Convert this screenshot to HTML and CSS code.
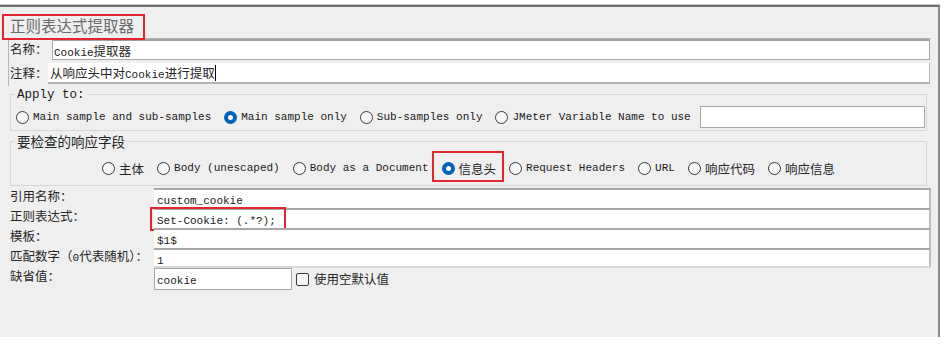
FILE: index.html
```html
<!DOCTYPE html>
<html>
	<head>
		<meta charset="UTF-8">
		<title>正则表达式提取器</title>
		<link rel="stylesheet" href="styles.css">
	</head>
	<body>
		<div class="panel">
			<!-- title -->
			<div class="title">
				正则表达式提取器
				<span class="mark mark-title"></span>
			</div>

			<!-- name / comments -->
			<div class="namebox">
				<div class="row">
					<span class="lbl lbl-name">名称：</span>
					<div class="field"><span class="en">Cookie</span>提取器</div>
				</div>
				<div class="row row-note">
					<span class="lbl lbl-note">注释：</span>
					<div class="field note">从响应头中对<span class="en">Cookie</span>进行提取<span class="caret"></span></div>
				</div>
			</div>

			<!-- apply to -->
			<fieldset class="group apply">
				<legend><span class="en">Apply to:</span></legend>
				<div class="opts">
					<label class="opt"><span class="radio"></span><span class="en">Main sample and sub-samples</span></label>
					<label class="opt"><span class="radio on"></span><span class="en">Main sample only</span></label>
					<label class="opt"><span class="radio"></span><span class="en">Sub-samples only</span></label>
					<label class="opt"><span class="radio"></span><span class="en">JMeter Variable Name to use</span></label>
					<div class="varname"></div>
				</div>
			</fieldset>

			<!-- field to check -->
			<fieldset class="group check">
				<legend>要检查的响应字段</legend>
				<div class="opts centered">
					<label class="opt"><span class="radio"></span>主体</label>
					<label class="opt"><span class="radio"></span><span class="en">Body (unescaped)</span></label>
					<label class="opt"><span class="radio"></span><span class="en">Body as a Document</span></label>
					<label class="opt hl"><span class="radio on"></span>信息头<span class="mark mark-hl"></span></label>
					<label class="opt"><span class="radio"></span><span class="en">Request Headers</span></label>
					<label class="opt"><span class="radio"></span><span class="en">URL</span></label>
					<label class="opt"><span class="radio"></span>响应代码</label>
					<label class="opt"><span class="radio"></span>响应信息</label>
				</div>
			</fieldset>

			<!-- settings -->
			<div class="settings">
				<div class="srow">
					<span class="slbl">引用名称：</span>
					<div class="inp"><span class="en">custom_cookie</span></div>
				</div>
				<div class="srow">
					<span class="slbl">正则表达式：</span>
					<div class="inp"><span class="en">Set-Cookie: (.*?);</span><span class="mark mark-re"></span></div>
				</div>
				<div class="srow">
					<span class="slbl">模板：</span>
					<div class="inp"><span class="en">$1$</span></div>
				</div>
				<div class="srow">
					<span class="slbl">匹配数字（<span class="en">0</span>代表随机）：</span>
					<div class="inp last"><span class="en">1</span></div>
				</div>
				<div class="srow">
					<span class="slbl">缺省值：</span>
					<div class="inp short"><span class="en">cookie</span></div>
					<label class="chk"><span class="box"></span>使用空默认值</label>
				</div>
			</div>
		</div>
	</body>
</html>
```

FILE: styles.css
```css
body {
	margin: 0;
	background-color: #ffffff;
	font-family: "Noto Sans CJK SC", sans-serif;
	font-size: 12.5px;
	color: #262626;
}
.en {
	font-family: "Liberation Mono", "Noto Sans CJK SC", monospace;
	font-size: 11px;
	color: #1a1a1a;
}
.panel {
	margin-top: 5px;
	width: 938px;
	height: 330px;
	background-color: #efefef;
	border-top: 2px solid #6f6f6f;
	border-right: 2px solid #8c8c8c;
	box-shadow: 0px -1px 0px #c4c4c4;
}
.mark {
	position: absolute;
	border: 2px solid #e3262e;
	box-sizing: border-box;
	pointer-events: none;
}
.title {
	position: relative;
	margin-top: 7px;
	padding-left: 10px;
	height: 24px;
	line-height: 22px;
	font-size: 15.5px;
	color: #6b6b6b;
}
.mark-title {
	left: 2px;
	top: 0px;
	width: 143px;
	height: 26px;
}

/* name + comments */
.namebox {
	margin-left: 8px;
	width: 922px;
	border-top: 1px solid #b5b5b5;
	border-left: 1px solid #b5b5b5;
	padding-bottom: 2px;
}
.row {
	display: flex;
	height: 21px;
	line-height: 19px;
}
.row-note {
	margin-top: 3px;
}
.lbl {
	flex-shrink: 0;
	padding-left: 1px;
	white-space: nowrap;
}
.lbl-name {
	width: 42px;
}
.lbl-note {
	width: 38px;
}
.field {
	flex: 1;
	margin-right: 1px;
	background-color: #ffffff;
	border: 1px solid #a9a9a9;
	border-top: 2px solid #a0a0a0;
	padding-left: 1px;
	box-sizing: border-box;
}
.field.note {
	border: none;
	border-right: 1px solid #b4b4b4;
	border-bottom: 2px solid #b4b4b4;
	padding-left: 2px;
	line-height: 20px;
}
.caret {
	display: inline-block;
	width: 1px;
	height: 16px;
	background-color: #000000;
	vertical-align: -3px;
}

/* groups */
.group {
	margin: 0px 0px 0px 10px;
	width: 917px;
	padding: 0px;
	border: 1px solid #d6d6d6;
	box-sizing: border-box;
}
.group legend {
	margin-left: 4px;
	padding: 0px 2px;
	line-height: 14px;
}
.apply legend .en {
	font-size: 12.5px;
}
.apply .opts {
	padding: 4px 0px 2px 5px;
}
.check {
	margin-top: 2px;
}
.check legend {
	font-size: 13.5px;
	line-height: 16px;
}
.check .opts {
	padding: 9px 0px 7px 0px;
}
.opts {
	display: flex;
	align-items: center;
	gap: 13px;
	height: 22px;
}
.centered {
	justify-content: center;
	height: 20px;
}
.opt {
	position: relative;
	display: flex;
	align-items: center;
	white-space: nowrap;
}
.radio {
	width: 13px;
	height: 13px;
	margin-right: 4px;
	border: 1px solid #3a3a3a;
	border-radius: 50%;
	background-color: #f7f7f7;
	box-sizing: border-box;
}
.radio.on {
	border: 4px solid #0063b8;
	background-color: #ffffff;
}
.varname {
	flex: 1;
	height: 22px;
	margin-left: -4px;
	margin-right: 1px;
	background-color: #ffffff;
	border: 1px solid #a8a8a8;
	box-sizing: border-box;
}
.mark-hl {
	left: -10px;
	top: -8px;
	width: 72px;
	height: 31px;
}

/* settings */
.settings {
	margin-top: 2px;
	margin-left: 10px;
}
.srow {
	display: flex;
	height: 20px;
	line-height: 17px;
}
.slbl {
	width: 144px;
	line-height: 15px;
	white-space: nowrap;
}
.inp {
	position: relative;
	width: 777px;
	height: 20px;
	background-color: #ffffff;
	border-top: 2px solid #a8a8a8;
	border-right: 2px solid #bcbcbc;
	padding-left: 3px;
	box-sizing: border-box;
}
.inp.last {
	border-bottom: 2px solid #d8d8d8;
}
.srow:last-child {
	height: 22px;
	line-height: 20px;
}
.inp.short {
	width: 138px;
	height: 22px;
	border: 1px solid #a8a8a8;
	padding-left: 2px;
}
.mark-re {
	left: -4px;
	top: -3px;
	width: 136px;
	height: 24px;
}
.chk {
	display: flex;
	align-items: center;
	margin-left: 4px;
}
.chk .box {
	width: 13px;
	height: 13px;
	margin-right: 5px;
	border: 1px solid #3a3a3a;
	border-radius: 2px;
	background-color: #f7f7f7;
	box-sizing: border-box;
}
```
